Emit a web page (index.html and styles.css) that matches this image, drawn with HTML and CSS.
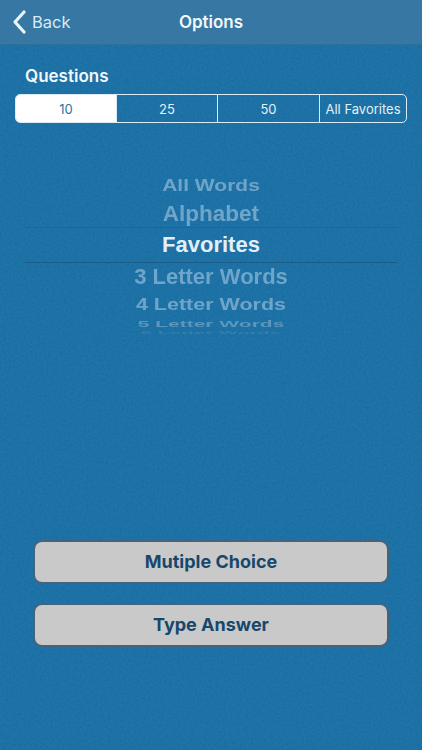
FILE: index.html
```html
<!DOCTYPE html>
<html lang="en">
<head>
  <meta charset="UTF-8" />
  <meta name="viewport" content="width=device-width, initial-scale=1.0"/>
  <title>Options</title>
  <link rel="stylesheet" href="styles.css">
</head>
<body>
  <svg class="grain" width="422" height="750" aria-hidden="true">
    <filter id="grainFilter">
      <feTurbulence type="fractalNoise" baseFrequency="0.45" numOctaves="3" seed="4"/>
      <feColorMatrix type="matrix" values="0 0 0 0 0  0 0 0 0 0.12  0 0 0 0 0.25  1.6 0 0 0 -0.6"/>
    </filter>
    <rect width="422" height="750" filter="url(#grainFilter)"/>
  </svg>

  <div class="page">
    <header class="navbar">
      <a class="back">
        <svg class="back-icon" width="14" height="24" viewBox="0 0 14 24">
          <path d="M12 2 L3 12 L12 22" fill="none" stroke="#eaf3f9" stroke-width="3.2" stroke-linecap="round" stroke-linejoin="round"/>
        </svg>
        <span>Back</span>
      </a>
      <h1>Options</h1>
    </header>

    <h2 class="section-title">Questions</h2>
    <div class="segments">
      <div class="segment active">10</div>
      <div class="segment">25</div>
      <div class="segment">50</div>
      <div class="segment">All Favorites</div>
    </div>

    <div class="picker">
      <div class="row row-far">All Words</div>
      <div class="row row-near">Alphabet</div>
      <div class="row row-selected">Favorites</div>
      <div class="row row-below">3 Letter Words</div>
      <div class="row row-far2">4 Letter Words</div>
      <div class="row row-edge">5 Letter Words</div>
      <div class="row row-last">6 Letter Words</div>
    </div>

    <div class="actions">
      <button>Mutiple Choice</button>
      <button>Type Answer</button>
    </div>
  </div>
</body>
</html>
```

FILE: styles.css
```css
html, body {
  margin: 0;
  padding: 0;
}

body {
  width: 422px;
  height: 750px;
  overflow: hidden;
  position: relative;
  background: #2073a8;
  font-family: Inter, "Liberation Sans", sans-serif;
  color: #eef5fa;
}

.grain {
  position: absolute;
  top: 0;
  left: 0;
  opacity: 0.4;
}

.page {
  position: relative;
}

.navbar {
  height: 44px;
  background: #3677a3;
  border-bottom: 1px solid #2f6f9b;
  display: flex;
  align-items: center;
  justify-content: center;
  position: relative;
}

.navbar h1 {
  margin: 0;
  font-size: 17px;
  font-weight: 600;
  color: #f2f7fa;
}

.back {
  position: absolute;
  left: 12px;
  top: 10px;
  display: flex;
  align-items: center;
  gap: 6px;
  font-size: 16.5px;
  color: #d9ebf6;
}

.section-title {
  margin: 20px 0 0 25px;
  height: 22px;
  line-height: 22px;
  font-size: 17px;
  font-weight: 600;
  color: #f2f7fa;
}

.segments {
  display: grid;
  grid-template-columns: 100px 101px 102px 1fr;
  margin: 7px 15px 0;
  height: 29px;
  box-sizing: border-box;
  border: 1px solid #dcebf5;
  border-radius: 5px;
  overflow: hidden;
}

.segment {
  display: flex;
  align-items: center;
  justify-content: center;
  font-size: 13px;
  color: #e4f0f7;
  border-left: 1px solid #dcebf5;
}

.segment:first-child {
  border-left: none;
}

.segment.active {
  background: #fff;
  color: #2a74a6;
}

.picker {
  margin: 50px 25px 0;
  font-family: "Liberation Sans", Arial, sans-serif;
  font-weight: bold;
  text-align: center;
}

.row {
  white-space: nowrap;
  color: #6fa5c9;
}

.row-far {
  height: 25px;
  line-height: 25px;
  font-size: 21px;
  transform: scaleY(0.78);
}

.row-near {
  height: 29px;
  line-height: 31px;
  font-size: 22.5px;
  transform: scaleY(0.98);
}

.row-selected {
  height: 34px;
  line-height: 34px;
  font-size: 22px;
  color: #e2eff8;
  border-top: 1px solid #276391;
  border-bottom: 1px solid #1d5a86;
}

.row-below {
  height: 28px;
  line-height: 28px;
  font-size: 22px;
  transform: scaleY(0.98);
}

.row-far2 {
  height: 27px;
  line-height: 27px;
  font-size: 21.5px;
  transform: scaleY(0.8);
}

.row-edge {
  height: 12px;
  line-height: 9px;
  font-size: 21px;
  color: #5c96bd;
  transform: scaleY(0.46);
}

.row-last {
  height: 6px;
  line-height: 6px;
  font-size: 20px;
  color: #3a7cab;
  transform: scaleY(0.14);
}

.actions {
  margin: 204px 33px 0;
  display: flex;
  flex-direction: column;
  gap: 19px;
}

.actions button {
  height: 44px;
  padding: 0 0 2px;
  background: #c9c9c9;
  border: 2px solid #46637a;
  border-radius: 9px;
  font-family: Inter, "Liberation Sans", sans-serif;
  font-size: 18px;
  font-weight: 700;
  color: #17476d;
}
```
